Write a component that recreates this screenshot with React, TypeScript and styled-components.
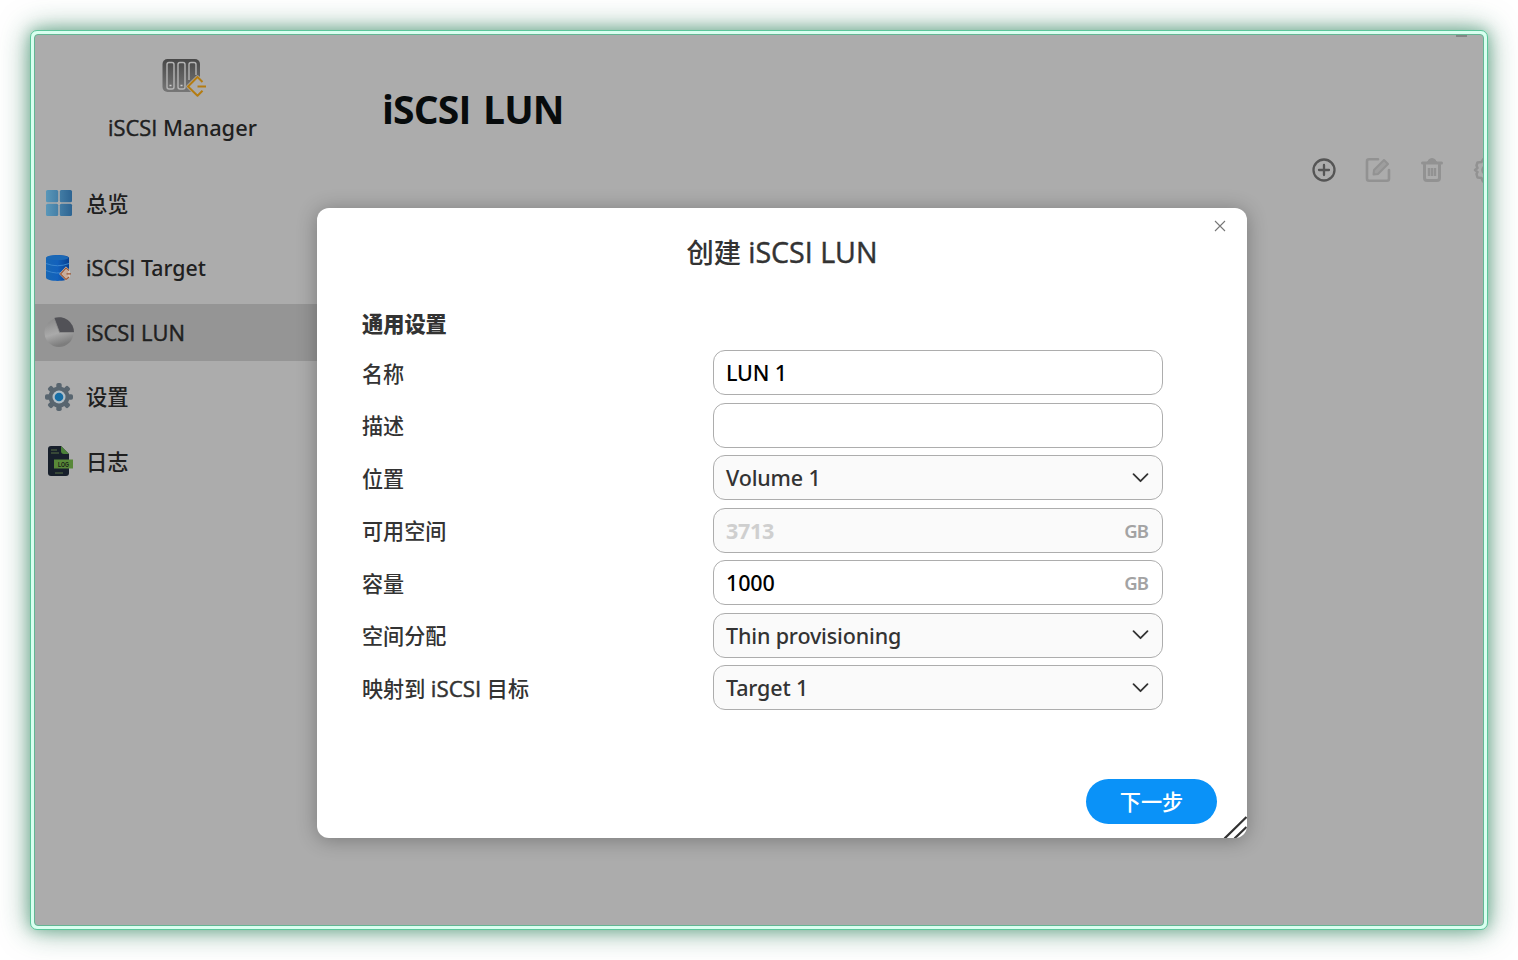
import React, { useState } from 'react';
import styled, { createGlobalStyle, css } from 'styled-components';

const GlobalStyle = createGlobalStyle`
  * {
    box-sizing: border-box;
  }

  body {
    margin: 0;
    background: #fff;
    font-family: 'Noto Sans', 'Noto Sans CJK SC', sans-serif;
    font-size: 22px;
    color: #333;
  }
`;

const Page = styled.div`
  height: 960px;
  padding: 30px;
  overflow: hidden;
`;

const Frame = styled.div`
  width: 1458px;
  height: 900px;
  padding: 3px;
  border: 1px solid #5cc79b;
  border-radius: 7px;
  background: #d9fff0;
  box-shadow: 0 0 14px rgba(32, 140, 92, 0.4), 0 0 30px rgba(20, 100, 65, 0.56);
`;

const Window = styled.div`
  position: relative;
  display: flex;
  width: 100%;
  height: 100%;
  overflow: hidden;
  border: 1px solid #63b794;
  border-radius: 4px;
  background: #acacac;
`;

const Sidebar = styled.aside`
  display: flex;
  flex-direction: column;
  flex: none;
  width: 282px;
`;

const Brand = styled.div`
  display: flex;
  flex-direction: column;
  align-items: center;
  height: 140px;
  padding: 21px 0 0 13px;
  color: #202020;
  font-size: 21.8px;
  font-weight: 500;
  line-height: 30px;

  svg {
    margin-bottom: 15px;
  }
`;

const Menu = styled.nav`
  display: flex;
  flex-direction: column;
  gap: 7.5px;
`;

const MenuItem = styled.div<{ $active?: boolean }>`
  display: flex;
  align-items: center;
  gap: 11px;
  height: 57px;
  padding-left: 8px;
  cursor: pointer;
  color: #202020;
  font-weight: 500;
  line-height: 30px;
  background: ${({ $active }) => ($active ? '#959595' : 'transparent')};

  svg {
    flex: none;
  }
`;

// Plain capital I without serifs
const Sans = styled.span`
  font-family: 'Open Sans', sans-serif;
  -webkit-text-stroke: 0.45px currentColor;
`;

const MenuText = styled.span`
  font-size: 21.3px;

  ${Sans} {
    font-size: 21.9px;
  }
`;

const Main = styled.main`
  flex: 1;
  display: flex;
  flex-direction: column;
  min-width: 0;
`;

const PageTitle = styled.h1`
  margin: 47px 0 0 65px;
  font-family: 'Open Sans', sans-serif;
  font-size: 39px;
  font-weight: 700;
  line-height: 54px;
  letter-spacing: -0.8px;
  word-spacing: 3px;
  color: #070b0c;
`;

const Toolbar = styled.div`
  display: flex;
  gap: 26px;
  margin: 20px 0 0 993px;

  svg {
    flex: none;
  }
`;

const Minimize = styled.span`
  position: absolute;
  top: 0;
  right: 16px;
  width: 11px;
  height: 2px;
  background: #858585;
`;

const Dialog = styled.section`
  position: absolute;
  top: 173px;
  left: 282px;
  display: flex;
  flex-direction: column;
  width: 930px;
  height: 630px;
  padding: 0 45px;
  overflow: hidden;
  border-radius: 12px;
  background: #fff;
  box-shadow: 0 2px 20px rgba(0, 0, 0, 0.3);
`;

const Close = styled.button`
  position: absolute;
  top: 12px;
  right: 21px;
  display: flex;
  padding: 0;
  border: 0;
  background: none;
`;

const DialogTitle = styled.h2`
  margin: 24px 0 0;
  text-align: center;
  font-size: 27.3px;
  font-weight: 500;
  line-height: 40px;

  ${Sans} {
    font-size: 28.6px;
  }
`;

const GroupTitle = styled.h3`
  margin: 36px 0 11px;
  font-size: 21.2px;
  font-weight: 900;
  line-height: 30px;
`;

const FormRow = styled.div`
  display: flex;
  align-items: center;
  height: 45px;
  margin-bottom: 7.5px;
`;

const Label = styled.label`
  width: 351px;
  font-size: 21.1px;
  font-weight: 500;
  line-height: 45px;
  padding-top: 1px;

  ${Sans} {
    font-size: 22.4px;
  }
`;

const Field = styled.div<{ $filled?: boolean }>`
  display: flex;
  align-items: center;
  justify-content: space-between;
  width: 450px;
  height: 45px;
  padding: 0 12px;
  border: 1px solid #adadad;
  border-radius: 12px;
  background: ${({ $filled }) => ($filled ? '#fafafa' : '#fff')};
`;

const textStyle = css`
  font-family: 'Noto Sans', 'Noto Sans CJK SC', sans-serif;
  font-size: 21.5px;
  font-weight: 500;
  line-height: 43px;
  letter-spacing: -0.15px;
`;

const Input = styled.input`
  ${textStyle}
  flex: 1;
  min-width: 0;
  height: 43px;
  padding: 0;
  border: 0;
  outline: 0;
  background: none;
  color: #000;

  &:disabled {
    font-weight: 700;
    letter-spacing: -0.3px;
    color: #cfcfcf;
  }
`;

const Selected = styled.span`
  ${textStyle}
  color: #333;
`;

const Unit = styled.span`
  margin-right: 2px;
  font-size: 18.5px;
  font-weight: 600;
  letter-spacing: -0.9px;
  color: #a3a3a3;
`;

const Footer = styled.div`
  display: flex;
  justify-content: flex-end;
  margin: auto -15px 14px 0;
`;

const NextButton = styled.button`
  width: 131px;
  height: 45px;
  padding: 0 0 3px;
  border: 0;
  border-radius: 23px;
  background: #0a92f8;
  color: #fff;
  font-family: 'Noto Sans', 'Noto Sans CJK SC', sans-serif;
  font-size: 21.2px;
  font-weight: 500;
`;

const ResizeHandle = styled.svg`
  position: absolute;
  right: 0;
  bottom: 0;
`;

const BrandIcon = () => (
  <svg width="44" height="42" viewBox="0 0 44 42" fill="none" overflow="visible">
    <defs>
      <linearGradient id="nas" x1="0" y1="0" x2="0" y2="1">
        <stop offset="0" stopColor="#484848" />
        <stop offset="1" stopColor="#777" />
      </linearGradient>
    </defs>
    <rect x="1.500" y="3" width="37.500" height="33" rx="5" fill="url(#nas)" />
    <g stroke="#b5b5b5" strokeWidth="1.4">
      <rect x="6" y="6.500" width="7" height="26.500" rx="2" />
      <rect x="17" y="6.500" width="7" height="26.500" rx="2" />
      <path d="M28 24V8.500q0-2 2-2h3q2 0 2 2V19" />
    </g>
    <path d="M8.500 29.500h2M19.500 29.500h2" stroke="#ccc" strokeWidth="1.5" />
    <path d="m41.500 26-5-5-9.500 9.500 9.500 9.200 5-5z" fill="#acacac" stroke="#acacac" strokeWidth="3.500" strokeLinejoin="round" />
    <path d="m41.500 26-5-5-9.500 9.500 9.500 9.200 5-5M36.500 30.500H45" stroke="#b47c12" strokeWidth="2" strokeLinejoin="round" />
  </svg>
);

const OverviewIcon = () => (
  <svg width="32" height="32" viewBox="0 1 32 32">
    <defs>
      <linearGradient id="tiles" x1="3" y1="0" x2="29" y2="0" gradientUnits="userSpaceOnUse">
        <stop offset="0" stopColor="#5a97b9" />
        <stop offset="1" stopColor="#2d6492" />
      </linearGradient>
    </defs>
    <g fill="url(#tiles)">
      <rect x="3" y="3" width="12.200" height="12.200" rx="1.500" />
      <rect x="16.800" y="3" width="12.200" height="12.200" rx="1.500" />
      <rect x="3" y="16.800" width="12.200" height="12.200" rx="1.500" />
      <rect x="16.800" y="16.800" width="12.200" height="12.200" rx="1.500" />
    </g>
  </svg>
);

const TargetIcon = () => (
  <svg width="32" height="32" viewBox="0 0 32 32" fill="none">
    <defs>
      <linearGradient id="disk" x1="0" y1="0" x2="1" y2="0">
        <stop offset="0" stopColor="#1767b5" />
        <stop offset="0.5" stopColor="#1261bd" />
        <stop offset="1" stopColor="#073f91" />
      </linearGradient>
    </defs>
    <path d="M3 6c0-4 23-4 23 0v19.500c0 4.500-23 4.500-23 0z" fill="url(#disk)" />
    <ellipse cx="14.500" cy="5.800" rx="11" ry="2.500" fill="#1b68b5" />
    <path d="M3 11.500q11.500 4.500 23 0M3 18.500q11.500 4.500 19 1" stroke="#3b86cf" strokeWidth="1" />
    <path d="m26 18.500-3-2.500-5.500 6 5.500 5.500 3-2.500z" fill="#c9ad9b" stroke="#d8c4b4" strokeWidth="2" />
    <path d="m26 18.500-3-2.500-5.500 6 5.500 5.500 3-2.500M23.500 21.800H28" stroke="#9c5938" strokeWidth="1.200" />
  </svg>
);

const LunIcon = () => (
  <svg width="32" height="32" viewBox="0 1 32 32">
    <defs>
      <linearGradient id="pie" x1="0" y1="0" x2="0.300" y2="1">
        <stop offset="0" stopColor="#858585" />
        <stop offset="0.600" stopColor="#aaa" />
        <stop offset="1" stopColor="#7d7d7d" />
      </linearGradient>
    </defs>
    <circle cx="16" cy="16.500" r="14.500" fill="url(#pie)" />
    <path d="M11 2a15 15 0 0 1 20 14.500H16.500z" fill="#525257" />
    <path d="m11 2 5.500 14.500H31" fill="none" stroke="#909090" strokeWidth="0.800" />
  </svg>
);

const SettingsIcon = () => (
  <svg width="32" height="32" viewBox="0 0 32 32">
    <g fill="#58656f">
      {[0, 45, 90, 135].map((angle) => (
        <rect key={angle} x="13.300" y="2" width="5.400" height="28" rx="1.800" transform={`rotate(${angle} 16 16)`} />
      ))}
      <circle cx="16" cy="16" r="10.500" />
    </g>
    <circle cx="16" cy="16" r="6.500" fill="#b0bdc5" />
    <circle cx="16" cy="16" r="4.300" fill="#176ea5" />
  </svg>
);

const LogIcon = () => (
  <svg width="32" height="32" viewBox="0 1 32 32">
    <path d="M8 1h10l8 8v19q0 3-3 3H8q-3 0-3-3V4q0-3 3-3z" fill="#171f2b" />
    <path d="M18 1v5q0 3 3 3h5z" fill="#4b8238" />
    <path d="M8 5h6M8 8h8M12 28h8" stroke="#587144" strokeWidth="1.200" />
    <rect x="11" y="14.500" width="19" height="9" fill="#588838" />
    <text x="15" y="21.500" fontSize="6.500" fontWeight="700" textLength="11" lengthAdjust="spacingAndGlyphs" fontFamily="Liberation Sans" fill="#172017">
      LOG
    </text>
  </svg>
);

const AddIcon = () => (
  <svg width="28" height="28" viewBox="0 0 28 28" fill="none" stroke="#555" strokeWidth="2.300" strokeLinecap="round">
    <circle cx="14" cy="14" r="10.500" />
    <path d="M14 9v10M9 14h10" />
  </svg>
);

const EditIcon = () => (
  <svg width="28" height="28" viewBox="0 0 28 28" fill="none" stroke="#929292" strokeLinejoin="round">
    <path d="M14 3.200H5q-2 0-2 2v17.600q0 2 2 2h18q2 0 2-2V14" strokeWidth="2.600" strokeLinecap="round" />
    <path d="m9.500 18.500.5-4.500L20 4l4 4-10 10z" strokeWidth="2" fill="#9e9e9e" />
  </svg>
);

const TrashIcon = () => (
  <svg width="28" height="28" viewBox="0 0 28 28" fill="none" stroke="#929292" strokeWidth="3" strokeLinecap="round">
    <path d="M4.500 7h19M6.500 9v13q0 2.500 2.500 2.500h10q2.500 0 2.500-2.500V9" />
    <path d="M9.500 6q1-3.500 4.500-3.500T18.500 6z" fill="#929292" strokeWidth="1" />
    <path d="M11 12v8M14 12v8M17 12v8" strokeWidth="2.400" strokeLinecap="butt" />
  </svg>
);

const GearIcon = () => (
  <svg width="28" height="28" viewBox="0 0 28 28" fill="none" stroke="#929292" strokeWidth="2.500" strokeLinejoin="round">
    <path d="M11.500 3h6l1.500 3.500 4 .5 2 4-2 3.500 2 3.500-2 4-4 .5-2 3h-6L9.500 22l-4-.5-1-3.500 1-2L3 14l2.500-2-1-2.500 1-3 4-.5z" />
    <circle cx="14.500" cy="14" r="4" />
  </svg>
);

const Chevron = () => (
  <svg width="18" height="18" viewBox="0 0 18 18" fill="none" stroke="#333" strokeWidth="1.800" strokeLinecap="round" strokeLinejoin="round">
    <path d="m1.500 5.200 7 7 7-7" />
  </svg>
);

const ISCSI = <Sans>iSCSI</Sans>;

const menu = [
  { id: 'overview', icon: <OverviewIcon />, text: '总览' },
  { id: 'target', icon: <TargetIcon />, text: <>{ISCSI} Target</> },
  { id: 'lun', icon: <LunIcon />, text: <Sans>iSCSI LUN</Sans> },
  { id: 'settings', icon: <SettingsIcon />, text: '设置' },
  { id: 'log', icon: <LogIcon />, text: '日志' },
];

const App: React.FC = () => {
  const [active, setActive] = useState('lun');
  const [name, setName] = useState('LUN 1');
  const [description, setDescription] = useState('');
  const [capacity, setCapacity] = useState('1000');

  return (
    <>
      <GlobalStyle />
      <Page>
        <Frame>
          <Window>
            <Sidebar>
              <Brand>
                <BrandIcon />
                <span>{ISCSI} Manager</span>
              </Brand>
              <Menu>
                {menu.map(({ id, icon, text }) => (
                  <MenuItem key={id} $active={active === id} onClick={() => setActive(id)}>
                    {icon}
                    <MenuText>{text}</MenuText>
                  </MenuItem>
                ))}
              </Menu>
            </Sidebar>
            <Main>
              <PageTitle>iSCSI LUN</PageTitle>
              <Toolbar>
                <AddIcon />
                <EditIcon />
                <TrashIcon />
                <GearIcon />
              </Toolbar>
            </Main>
            <Minimize />
            <Dialog>
              <Close aria-label="关闭">
                <svg width="12" height="12" viewBox="0 0 12 12" stroke="#777" strokeWidth="1.100">
                  <path d="m1 1 10 10M11 1 1 11" />
                </svg>
              </Close>
              <DialogTitle>
                创建 <Sans>iSCSI LUN</Sans>
              </DialogTitle>
              <GroupTitle>通用设置</GroupTitle>
              <FormRow>
                <Label>名称</Label>
                <Field>
                  <Input value={name} onChange={(e) => setName(e.target.value)} />
                </Field>
              </FormRow>
              <FormRow>
                <Label>描述</Label>
                <Field>
                  <Input value={description} onChange={(e) => setDescription(e.target.value)} />
                </Field>
              </FormRow>
              <FormRow>
                <Label>位置</Label>
                <Field $filled>
                  <Selected>Volume 1</Selected>
                  <Chevron />
                </Field>
              </FormRow>
              <FormRow>
                <Label>可用空间</Label>
                <Field $filled>
                  <Input value="3713" disabled />
                  <Unit>GB</Unit>
                </Field>
              </FormRow>
              <FormRow>
                <Label>容量</Label>
                <Field>
                  <Input value={capacity} onChange={(e) => setCapacity(e.target.value)} />
                  <Unit>GB</Unit>
                </Field>
              </FormRow>
              <FormRow>
                <Label>空间分配</Label>
                <Field $filled>
                  <Selected>Thin provisioning</Selected>
                  <Chevron />
                </Field>
              </FormRow>
              <FormRow>
                <Label>映射到 {ISCSI} 目标</Label>
                <Field $filled>
                  <Selected>Target 1</Selected>
                  <Chevron />
                </Field>
              </FormRow>
              <Footer>
                <NextButton>下一步</NextButton>
              </Footer>
              <ResizeHandle width="24" height="24" viewBox="0 0 24 24" stroke="#333" strokeWidth="2.300">
                <path d="M1.500 24.500 23.500 3M11.500 24.500l12-11.500" />
              </ResizeHandle>
            </Dialog>
          </Window>
        </Frame>
      </Page>
    </>
  );
};

export default App;
